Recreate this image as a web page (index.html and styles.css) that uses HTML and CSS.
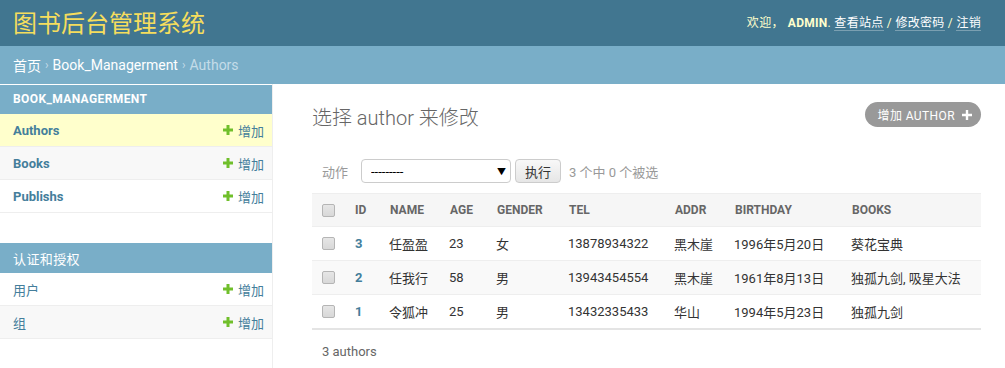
FILE: index.html
```html
<!DOCTYPE html>
<html lang="zh-CN">
  <head>
    <meta charset="UTF-8" />
    <title>选择 author 来修改 | 图书后台管理系统</title>
    <link rel="stylesheet" href="styles.css">
  </head>
  <body>
    <div class="header">
      <div class="branding">图书后台管理系统</div>
      <div class="user-tools">
        欢迎，<strong>ADMIN</strong>.
        <a href="#">查看站点</a> /
        <a href="#">修改密码</a> /
        <a href="#">注销</a>
      </div>
    </div>
    <div class="breadcrumbs">
      <a href="#">首页</a><span class="sep">›</span><a href="#">Book_Managerment</a><span class="sep">›</span><span class="current">Authors</span>
    </div>
    <div class="main">
      <div class="sidebar">
        <div class="module">
          <div class="module-title">Book_Managerment</div>
          <div class="model-row current-model">
            <a class="model-name" href="#">Authors</a>
            <a class="addlink" href="#"><svg width="10" height="10" viewBox="0 0 10 10"><path d="M3.5 0h3v3.5H10v3H6.5V10h-3V6.5H0v-3h3.5z" fill="#70bf2b"/></svg>增加</a>
          </div>
          <div class="model-row alt">
            <a class="model-name" href="#">Books</a>
            <a class="addlink" href="#"><svg width="10" height="10" viewBox="0 0 10 10"><path d="M3.5 0h3v3.5H10v3H6.5V10h-3V6.5H0v-3h3.5z" fill="#70bf2b"/></svg>增加</a>
          </div>
          <div class="model-row">
            <a class="model-name" href="#">Publishs</a>
            <a class="addlink" href="#"><svg width="10" height="10" viewBox="0 0 10 10"><path d="M3.5 0h3v3.5H10v3H6.5V10h-3V6.5H0v-3h3.5z" fill="#70bf2b"/></svg>增加</a>
          </div>
        </div>
        <div class="module">
          <div class="module-title cn">认证和授权</div>
          <div class="model-row">
            <a class="model-name cn" href="#">用户</a>
            <a class="addlink" href="#"><svg width="10" height="10" viewBox="0 0 10 10"><path d="M3.5 0h3v3.5H10v3H6.5V10h-3V6.5H0v-3h3.5z" fill="#70bf2b"/></svg>增加</a>
          </div>
          <div class="model-row alt">
            <a class="model-name cn" href="#">组</a>
            <a class="addlink" href="#"><svg width="10" height="10" viewBox="0 0 10 10"><path d="M3.5 0h3v3.5H10v3H6.5V10h-3V6.5H0v-3h3.5z" fill="#70bf2b"/></svg>增加</a>
          </div>
        </div>
      </div>
      <div class="content">
        <div class="content-head">
          <h1>选择 author 来修改</h1>
          <a class="addbutton" href="#">增加 AUTHOR<svg width="10" height="10" viewBox="0 0 10 10"><path d="M3.8 0h2.4v3.8H10v2.4H6.2V10H3.8V6.2H0V3.8h3.8z" fill="#fff"/></svg></a>
        </div>
        <div class="actions">
          <span class="label">动作</span>
          <span class="select-wrap">
            <select class="action-select"><option>---------</option></select>
            <span class="arrow">▼</span>
          </span>
          <button class="go">执行</button>
          <span class="counter">3 个中 0 个被选</span>
        </div>
        <table class="result-list">
          <colgroup>
            <col style="width: 33px" />
            <col style="width: 35px" />
            <col style="width: 60px" />
            <col style="width: 47px" />
            <col style="width: 72px" />
            <col style="width: 106px" />
            <col style="width: 60px" />
            <col style="width: 117px" />
            <col style="width: 139px" />
          </colgroup>
          <thead>
            <tr>
              <th><input type="checkbox" class="cb" /></th>
              <th>Id</th>
              <th>Name</th>
              <th>Age</th>
              <th>Gender</th>
              <th>Tel</th>
              <th>Addr</th>
              <th>Birthday</th>
              <th>Books</th>
            </tr>
          </thead>
          <tbody>
            <tr>
              <td><input type="checkbox" class="cb" /></td>
              <td><a class="pk" href="#">3</a></td>
              <td>任盈盈</td>
              <td>23</td>
              <td>女</td>
              <td>13878934322</td>
              <td>黑木崖</td>
              <td>1996年5月20日</td>
              <td>葵花宝典</td>
            </tr>
            <tr class="alt">
              <td><input type="checkbox" class="cb" /></td>
              <td><a class="pk" href="#">2</a></td>
              <td>任我行</td>
              <td>58</td>
              <td>男</td>
              <td>13943454554</td>
              <td>黑木崖</td>
              <td>1961年8月13日</td>
              <td>独孤九剑, 吸星大法</td>
            </tr>
            <tr>
              <td><input type="checkbox" class="cb" /></td>
              <td><a class="pk" href="#">1</a></td>
              <td>令狐冲</td>
              <td>25</td>
              <td>男</td>
              <td>13432335433</td>
              <td>华山</td>
              <td>1994年5月23日</td>
              <td>独孤九剑</td>
            </tr>
          </tbody>
        </table>
        <p class="paginator">3 authors</p>
      </div>
    </div>
  </body>
</html>
```

FILE: styles.css
```css
* {
  margin: 0;
  padding: 0;
  box-sizing: border-box;
}
body {
  font-family: Roboto, "Noto Sans CJK SC", sans-serif;
  font-size: 13px;
  color: #333;
  background: #fff;
  width: 1005px;
  height: 368px;
  overflow: hidden;
}
a {
  text-decoration: none;
}
.header {
  height: 46px;
  background: #417690;
  display: flex;
  justify-content: space-between;
  align-items: center;
  padding: 0 24px 4px 13px;
}
.branding {
  font-size: 24px;
  color: #f5dd5d;
  font-weight: 400;
}
.user-tools {
  font-size: 12px;
  color: #ffc;
  letter-spacing: 0.3px;
}
.user-tools strong {
  font-weight: 700;
  margin-left: 4px;
}
.user-tools a {
  color: #fff;
  border-bottom: 1px solid rgba(255, 255, 255, 0.3);
}
.breadcrumbs {
  height: 38px;
  background: #79aec8;
  display: flex;
  align-items: center;
  padding: 0 13px;
  font-size: 14px;
  color: #c4dce8;
}
.breadcrumbs a {
  color: #fff;
}
.breadcrumbs .sep {
  margin: 0 4px;
  font-size: 12px;
  color: #c4dce8;
}
.main {
  display: flex;
  height: 284px;
}
.sidebar {
  width: 273px;
  padding-top: 1px;
  border-right: 1px solid #eee;
}
.module {
  margin-bottom: 30px;
}
.module-title {
  background: #79aec8;
  color: #fff;
  height: 29px;
  line-height: 29px;
  padding-left: 13px;
  font-size: 12px;
  font-weight: 700;
  text-transform: uppercase;
  letter-spacing: 0.4px;
}
.module-title.cn {
  height: 30px;
  line-height: 33px;
  font-weight: 400;
  font-size: 13px;
}
.model-row {
  height: 33px;
  display: flex;
  justify-content: space-between;
  align-items: center;
  padding: 0 8px 0 13px;
  border-bottom: 1px solid #eee;
}
.model-row.alt {
  background: #f8f8f8;
}
.model-row.current-model {
  background: #ffc;
}
.model-name {
  color: #447e9b;
  font-weight: 700;
  font-size: 13px;
}
.model-name.cn {
  font-weight: 400;
}
.addlink {
  color: #447e9b;
  font-size: 13px;
  display: flex;
  align-items: center;
}
.addlink svg {
  margin-right: 5px;
}
.content {
  flex: 1;
  padding: 18px 24px 0 39px;
}
.content-head {
  display: flex;
  justify-content: space-between;
  align-items: center;
  height: 29px;
}
.content-head h1 {
  font-size: 20px;
  font-weight: 300;
  color: #666;
}
.addbutton {
  display: flex;
  align-items: center;
  height: 25px;
  margin-bottom: 4px;
  padding: 0 9px 0 13px;
  border-radius: 13px;
  background: #999;
  color: #fff;
  font-size: 12px;
  letter-spacing: 0.4px;
}
.addbutton svg {
  margin-left: 7px;
}
.actions {
  display: flex;
  align-items: center;
  height: 30px;
  margin-top: 25px;
  padding-left: 10px;
  color: #999;
  font-size: 13px;
}
.actions .label {
  margin-right: 13px;
}
.select-wrap {
  position: relative;
  display: inline-block;
}
.action-select {
  appearance: none;
  width: 150px;
  height: 24px;
  border: 1px solid #ccc;
  border-radius: 4px;
  background: #fff;
  color: #000;
  font-family: Roboto, sans-serif;
  font-size: 13px;
  padding-left: 9px;
}
.select-wrap .arrow {
  position: absolute;
  right: 5px;
  top: 6px;
  font-size: 9px;
  color: #000;
}
.go {
  height: 24px;
  margin-left: 4px;
  padding: 0 9px;
  border: 1px solid #ccc;
  border-radius: 4px;
  background: linear-gradient(#f8f8f8, #e6e6e6);
  color: #333;
  font-family: "Noto Sans CJK SC", sans-serif;
  font-size: 13px;
}
.counter {
  margin-left: 8px;
}
.result-list {
  width: 669px;
  table-layout: fixed;
  border-collapse: collapse;
  margin-top: 7px;
  border-top: 1px solid #eee;
  border-bottom: 2px solid #e4e4e4;
}
.result-list th {
  background: #f6f6f6;
  height: 33px;
  text-align: left;
  padding: 0 0 0 10px;
  font-size: 12px;
  font-weight: 700;
  color: #666;
  text-transform: uppercase;
  border-bottom: 1px solid #eee;
}
.result-list td {
  height: 34px;
  padding: 0 0 0 9px;
  color: #333;
  font-size: 13px;
  border-bottom: 1px solid #eee;
}
.result-list tr.alt td {
  background: #f9f9f9;
}
.result-list tr:last-child td {
  border-bottom: none;
}
.result-list th:first-child,
.result-list td:first-child {
  padding-left: 10px;
}
.cb {
  appearance: none;
  display: block;
  width: 13px;
  height: 13px;
  border: 1px solid #b5b5b5;
  border-radius: 2px;
  background: linear-gradient(#e6e6e6, #d8d8d8);
}
.pk {
  color: #447e9b;
  font-weight: 700;
  margin-left: 1px;
}
.paginator {
  padding: 14px 10px 0;
  color: #666;
  font-size: 13px;
}
```
